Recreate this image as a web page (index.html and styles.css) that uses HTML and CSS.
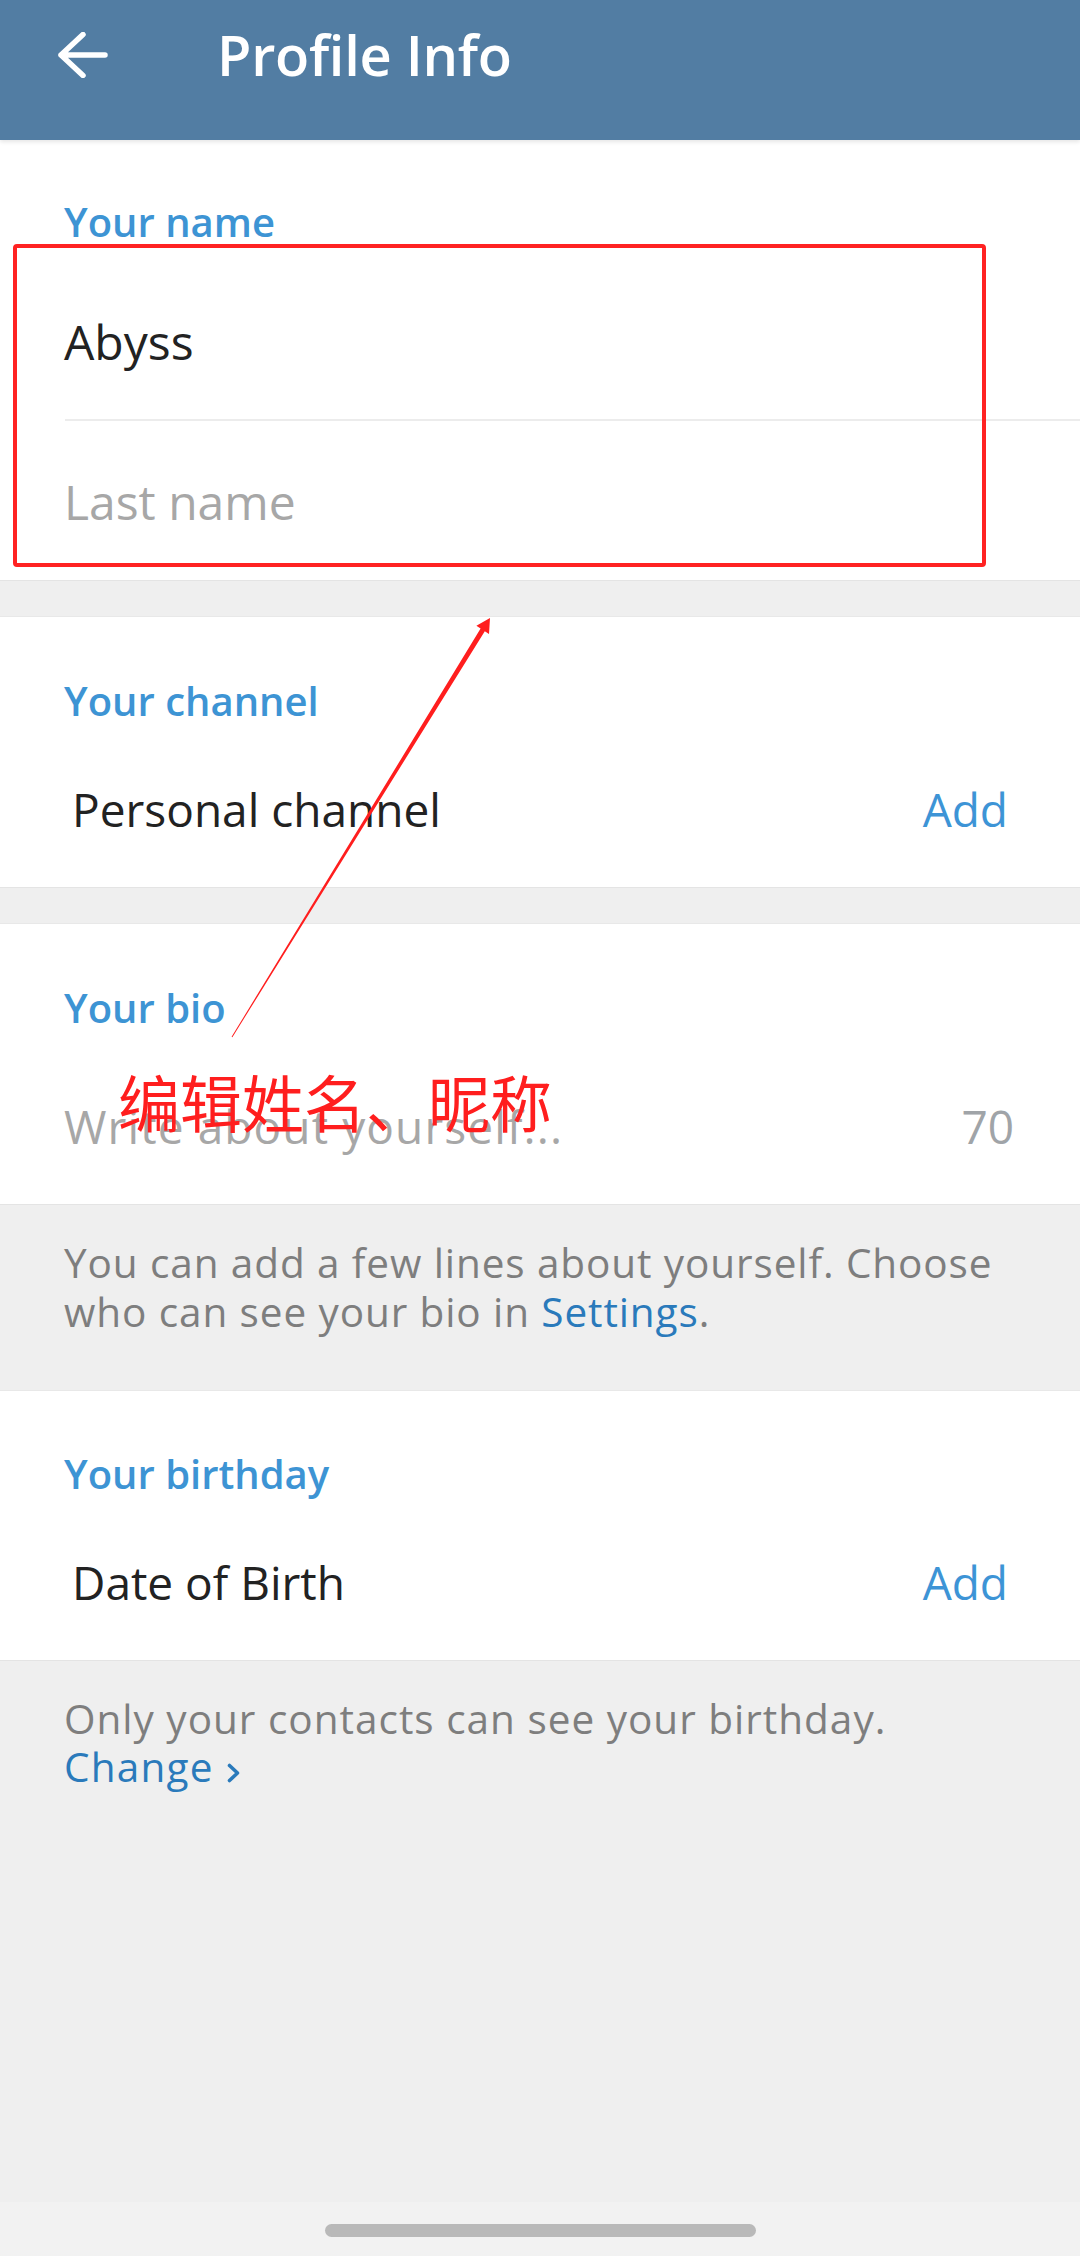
FILE: index.html
```html
<!DOCTYPE html>
<html lang="en">
<head>
<meta charset="utf-8">
<title>Profile Info</title>
<link rel="stylesheet" href="styles.css">
</head>
<body>
<div class="screen">
  <header class="appbar">
    <svg class="back" viewBox="0 0 50 46" width="50" height="46" aria-hidden="true">
      <path d="M3 23 H47 M3 23 L25 2.5 M3 23 L25 43.5" fill="none" stroke="#fff" stroke-width="5.5" stroke-linecap="round" stroke-linejoin="round"/>
    </svg>
    <h1 class="title">Profile Info</h1>
  </header>

  <section class="card card-name">
    <div class="label">Your name</div>
    <div class="field field-first">Abyss</div>
    <div class="divider"></div>
    <div class="field field-last placeholder">Last name</div>
  </section>

  <div class="gap"></div>

  <section class="card card-channel">
    <div class="label">Your channel</div>
    <div class="row">
      <span class="row-text">Personal channel</span>
      <span class="action">Add</span>
    </div>
  </section>

  <div class="gap"></div>

  <section class="card card-bio">
    <div class="label">Your bio</div>
    <div class="row row-bio">
      <span class="placeholder bio-placeholder">Write about yourself...</span>
      <span class="counter">70</span>
    </div>
  </section>

  <p class="help help-bio">You can add a few lines about yourself. Choose who can see your bio in <span class="link">Settings</span>.</p>

  <section class="card card-birthday">
    <div class="label">Your birthday</div>
    <div class="row">
      <span class="row-text">Date of Birth</span>
      <span class="action">Add</span>
    </div>
  </section>

  <p class="help help-birthday"><span class="help-wide">Only your contacts can see your birthday.</span><br><span class="link link-change">Change</span><svg class="chev" viewBox="0 0 16 20" width="16" height="20" aria-hidden="true"><path d="M3.5 2.5 L11.5 10 L3.5 17.5" fill="none" stroke="#2a7abb" stroke-width="3.6" stroke-linecap="round" stroke-linejoin="round"/></svg></p>

  <div class="spacer"></div>

  <div class="navbar"><div class="home-indicator"></div></div>
</div>

<div class="annot-box"></div>
<svg class="annot-arrow" width="1080" height="2256" viewBox="0 0 1080 2256" aria-hidden="true">
  <polygon points="231.6,1036.8 480.6,628.6 476.4,625.8 490,618 489,634 484.8,631.2 232.4,1037.2" fill="#ff1e1e"/>
</svg>
<div class="annot-text">编辑姓名、昵称</div>
</body>
</html>
```

FILE: styles.css
```css
* { box-sizing: border-box; }

html, body {
  margin: 0;
  padding: 0;
}

body {
  width: 1080px;
  min-height: 2256px;
  background: #efefef;
  font-family: "Open Sans", "Noto Sans", "Liberation Sans", sans-serif;
  color: #222222;
  position: relative;
}

.screen {
  display: flex;
  flex-direction: column;
  min-height: 2256px;
}

.appbar {
  height: 140px;
  background: #527da3;
  display: flex;
  align-items: flex-start;
  padding: 32px 0 0 58px;
  box-shadow: 0 2px 4px rgba(0, 0, 0, 0.10);
  position: relative;
  z-index: 1;
}

.back {
  display: block;
  flex: none;
}

.title {
  margin: -16px 0 0 109px;
  font-size: 56px;
  line-height: 76px;
  font-weight: 600;
  color: #ffffff;
  letter-spacing: -0.3px;
}

.card {
  background: #ffffff;
  display: flex;
  flex-direction: column;
  box-shadow: 0 1px 0 #e4e4e4, 0 -1px 0 #e8e8e8;
}

.label {
  font-size: 40px;
  line-height: 56px;
  font-weight: 600;
  color: #3d94d4;
  padding-left: 64px;
}

.card-name { padding-top: 54px; padding-bottom: 48px; }
.card-name .label { margin-bottom: 62px; }

.field {
  font-size: 48px;
  line-height: 60px;
  padding-left: 64px;
}

.field-first { margin-bottom: 47px; }

.divider {
  height: 2px;
  background: #ececec;
  margin-left: 65px;
}

.field-last { margin-top: 51px; }

.placeholder { color: #a7a7a7; }

.gap { height: 37px; }

.card-channel { padding-top: 56px; padding-bottom: 48px; }
.card-bio { padding-top: 56px; padding-bottom: 48px; }
.card-birthday { padding-top: 55px; padding-bottom: 48px; }

.row {
  display: flex;
  justify-content: space-between;
  align-items: center;
  font-size: 46px;
  line-height: 60px;
  padding: 0 72px 0 72px;
  margin-top: 50px;
}

.row-bio {
  padding-left: 64px;
  padding-right: 66px;
  margin-top: 60px;
}

.bio-placeholder { letter-spacing: 1.1px; }

.action { color: #3d94d6; }

.counter { color: #a0a4a8; }

.help {
  margin: 0;
  font-size: 40.5px;
  line-height: 49px;
  color: #7e7e7e;
  padding-left: 64px;
  padding-right: 40px;
}

.help-bio { padding-top: 34px; padding-bottom: 55px; letter-spacing: 0.9px; }
.help-birthday { padding-top: 35px; line-height: 48px; }
.help-wide { letter-spacing: 1px; }

.link { color: #2a7abb; }
.link-change { letter-spacing: 1.2px; }

.chev {
  display: inline-block;
  vertical-align: baseline;
  margin-left: 12px;
  margin-bottom: -1px;
}

.spacer { flex: 1; }

.navbar {
  height: 54px;
  background: #f2f2f2;
  display: flex;
  justify-content: center;
  padding-top: 22px;
}

.home-indicator {
  width: 431px;
  height: 13px;
  border-radius: 7px;
  background: #b9b9b9;
}

/* annotation overlays */
.annot-box {
  position: absolute;
  left: 13px;
  top: 244px;
  width: 973px;
  height: 323px;
  border: 4px solid #ff2222;
  border-radius: 4px;
}

.annot-arrow {
  position: absolute;
  left: 0;
  top: 0;
  pointer-events: none;
}

.annot-text {
  position: absolute;
  left: 118px;
  top: 1070px;
  font-family: "Noto Sans CJK SC", sans-serif;
  font-size: 62px;
  line-height: 62px;
  color: #ff1e1e;
  white-space: nowrap;
}
```
